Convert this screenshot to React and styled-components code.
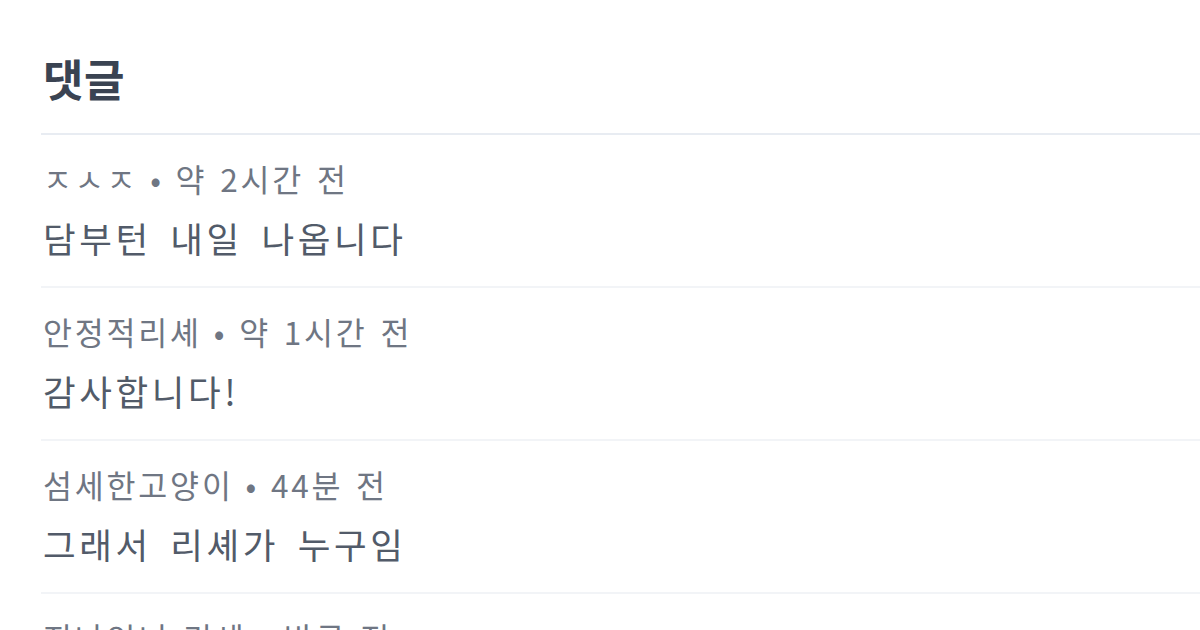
import React from "react";
import styled, { createGlobalStyle } from "styled-components";

const Global = createGlobalStyle`
  html, body { margin: 0; padding: 0; background: #ffffff; }
  body {
    font-family: "Noto Sans CJK KR", "Noto Sans", sans-serif;
    overflow: hidden;
  }
`;

const Page = styled.div`
  width: 1200px;
  height: 630px;
  overflow: hidden;
  padding: 0 0 0 41px;
  box-sizing: border-box;
`;

const Section = styled.section`
  display: flex;
  flex-direction: column;
`;

const Heading = styled.h2`
  margin: 0;
  padding: 52px 0 29px 2px;
  font-size: 44px;
  line-height: 52px;
  font-weight: 700;
  letter-spacing: 0.5px;
  color: #3a4352;
  border-bottom: 2px solid #e8ecf2;
`;

const List = styled.ul`
  list-style: none;
  margin: 0;
  padding: 0;
`;

const Item = styled.li`
  display: flex;
  flex-direction: column;
  gap: 8px;
  padding: 20px 0 21px 2px;
  border-bottom: 2px solid #f2f4f7;
`;

const Meta = styled.div`
  font-size: 31.5px;
  line-height: 47px;
  color: #6f7683;
  letter-spacing: 2.8px;
  word-spacing: 3px;
`;

const Dot = styled.span`
  display: inline-block;
  margin: 0 -1px;
`;

const Body = styled.p`
  margin: 0;
  font-size: 35.5px;
  line-height: 55px;
  color: #525b69;
  letter-spacing: 3.6px;
  word-spacing: 7px;
`;

const comments = [
  { author: "ㅈㅅㅈ", time: "약 2시간 전", text: "담부턴 내일 나옵니다" },
  { author: "안정적리셰", time: "약 1시간 전", text: "감사합니다!" },
  { author: "섬세한고양이", time: "44분 전", text: "그래서 리셰가 누구임" },
  { author: "지나인니 리셰", time: "방금 전", text: "ㅋㅋ" },
];

export default function App() {
  return (
    <>
      <Global />
      <Page>
        <Section>
          <Heading>댓글</Heading>
          <List>
            {comments.map((c, i) => (
              <Item key={i}>
                <Meta>
                  {c.author} <Dot>•</Dot> {c.time}
                </Meta>
                <Body>{c.text}</Body>
              </Item>
            ))}
          </List>
        </Section>
      </Page>
    </>
  );
}
